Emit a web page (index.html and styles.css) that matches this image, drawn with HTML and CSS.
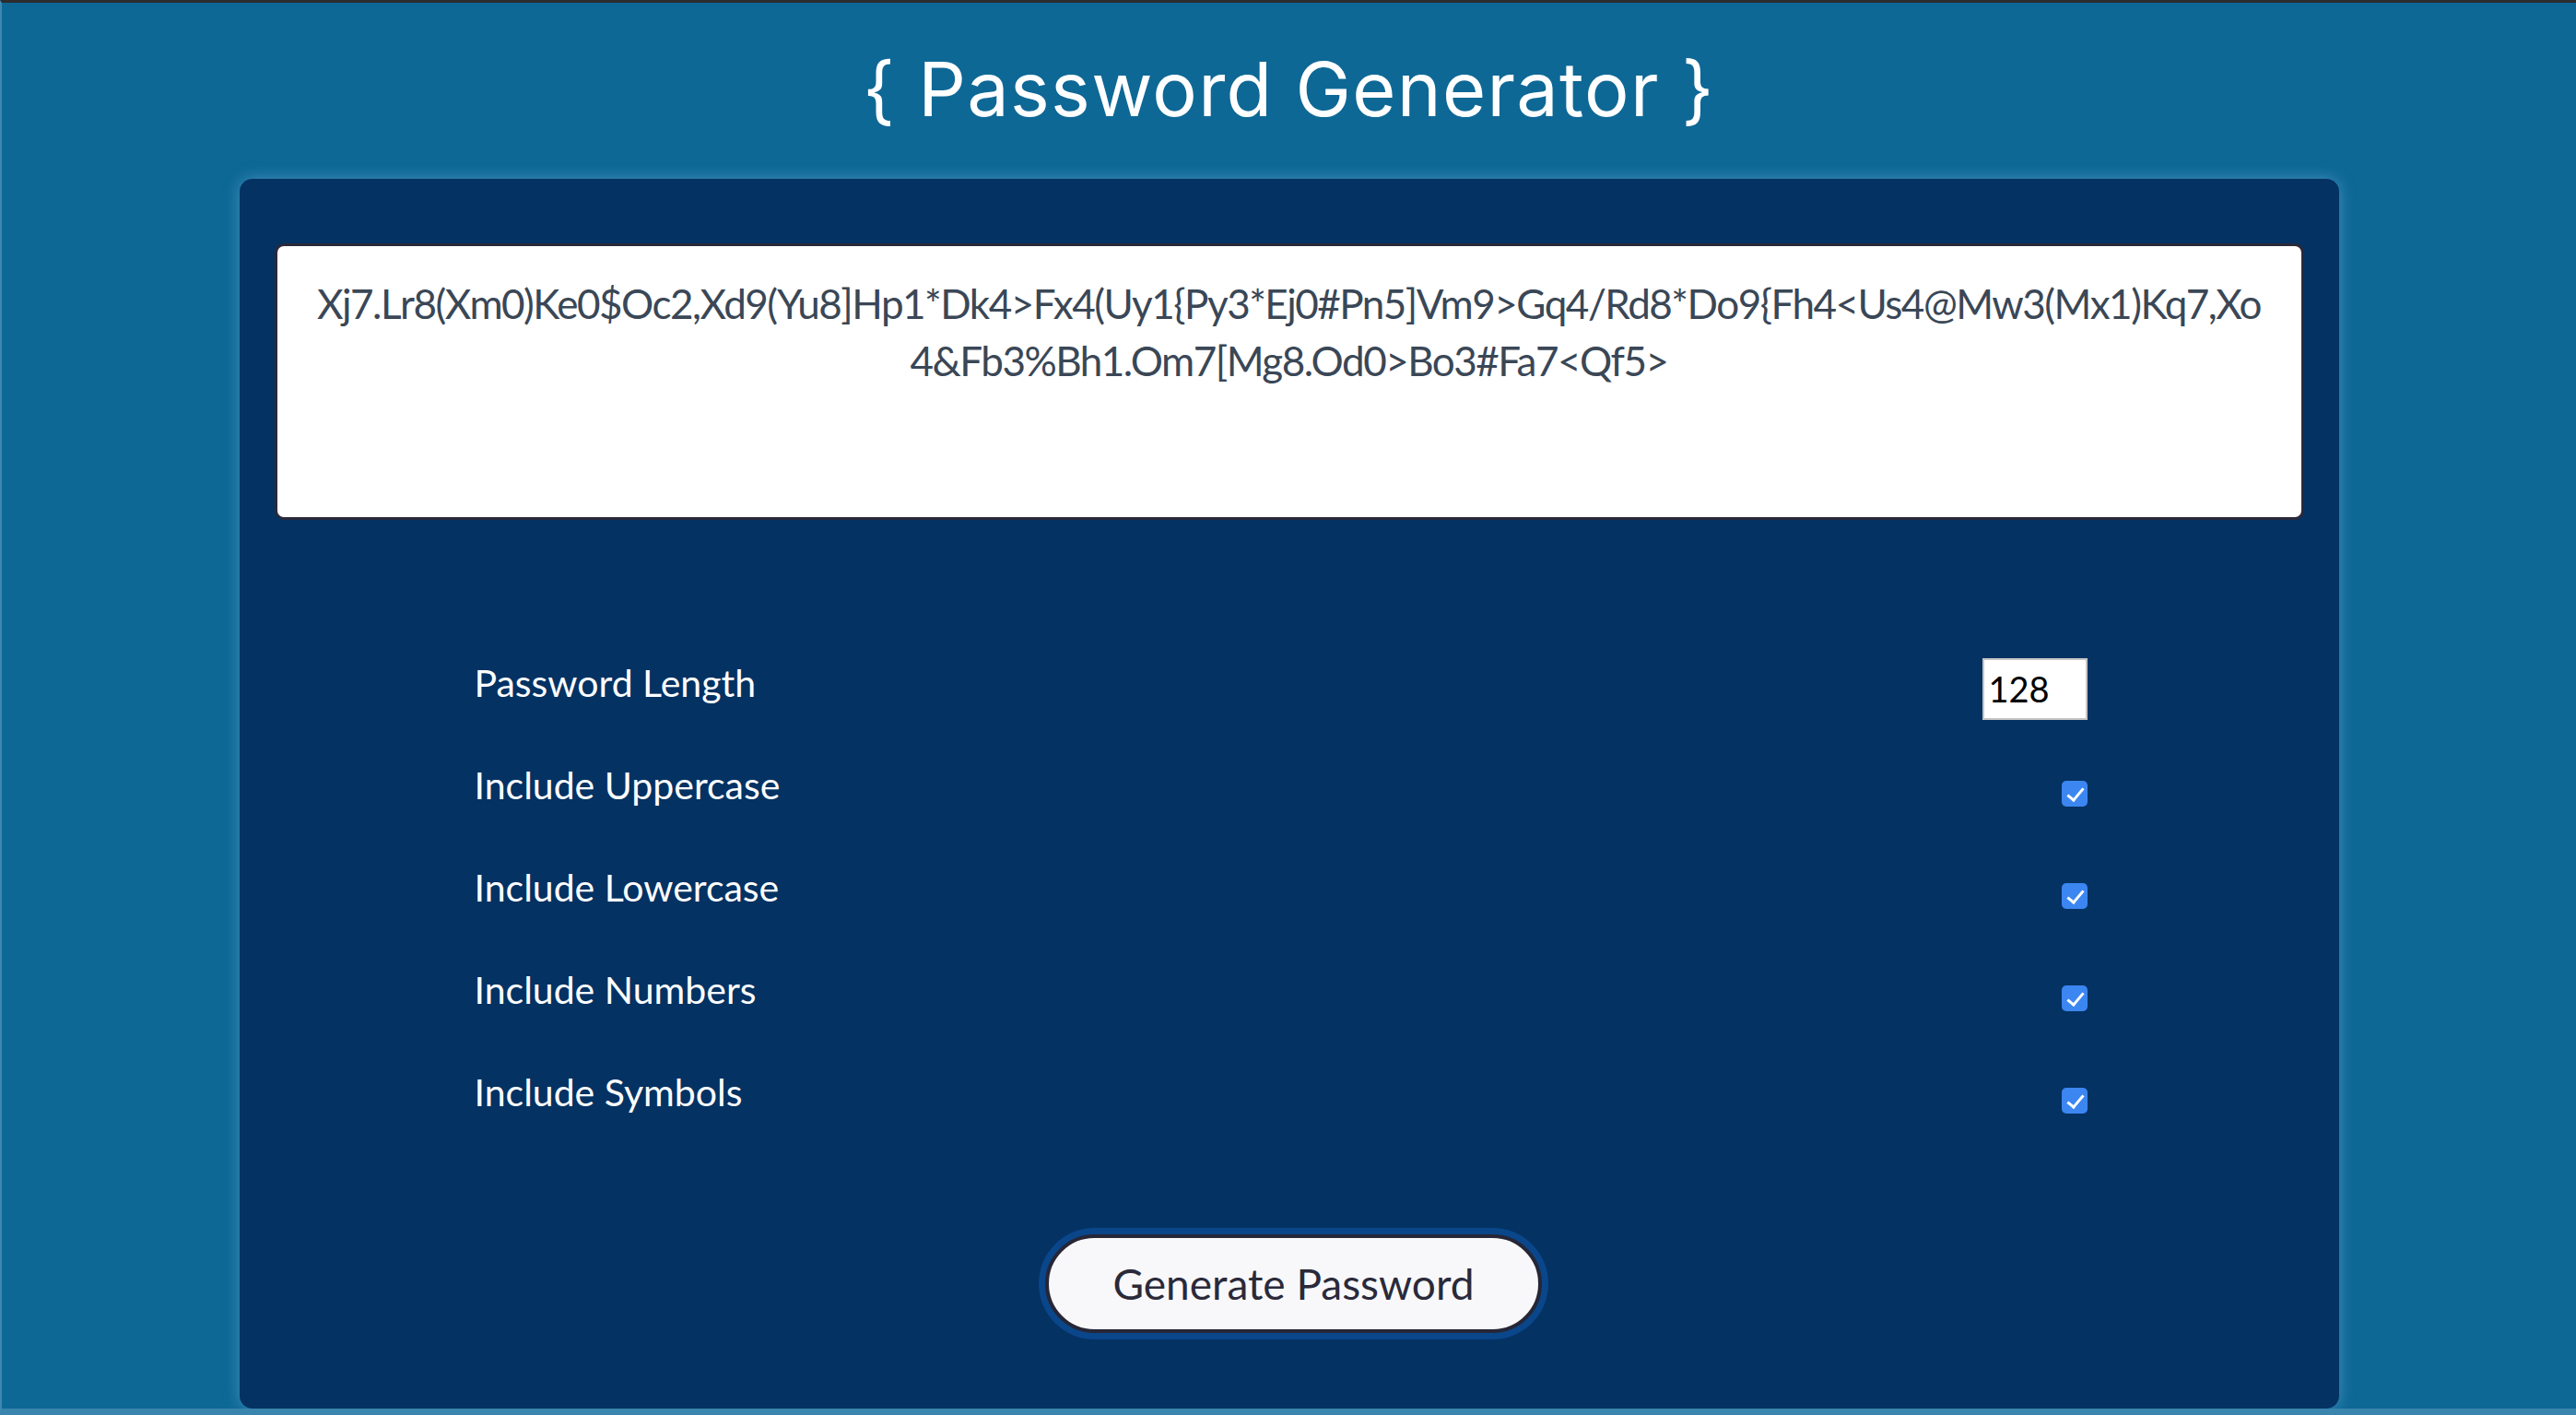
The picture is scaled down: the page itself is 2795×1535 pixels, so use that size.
FILE: index.html
```html
<!DOCTYPE html>
<html lang="en">
<head>
<meta charset="utf-8">
<title>Password Generator</title>
<link rel="stylesheet" href="styles.css">
</head>
<body>
<div class="page">
  <h1 class="title">{ Password Generator }</h1>
  <main class="card">
    <textarea class="output" readonly>Xj7.Lr8(Xm0)Ke0$Oc2,Xd9(Yu8]Hp1*Dk4>Fx4(Uy1{Py3*Ej0#Pn5]Vm9>Gq4/Rd8*Do9{Fh4<Us4@Mw3(Mx1)Kq7,Xo
4&Fb3%Bh1.Om7[Mg8.Od0>Bo3#Fa7<Qf5></textarea>
    <form class="options">
      <div class="row">
        <label class="label" for="len">Password Length</label>
        <input class="num" id="len" type="number" value="128">
      </div>
      <div class="row">
        <label class="label" for="up">Include Uppercase</label>
        <input class="check" id="up" type="checkbox" checked>
      </div>
      <div class="row">
        <label class="label" for="low">Include Lowercase</label>
        <input class="check" id="low" type="checkbox" checked>
      </div>
      <div class="row">
        <label class="label" for="nums">Include Numbers</label>
        <input class="check" id="nums" type="checkbox" checked>
      </div>
      <div class="row">
        <label class="label" for="sym">Include Symbols</label>
        <input class="check" id="sym" type="checkbox" checked>
      </div>
    </form>
    <div class="actions">
      <button class="generate" type="button">Generate Password</button>
    </div>
  </main>
</div>
</body>
</html>
```

FILE: styles.css
```css
* {
  box-sizing: border-box;
}

html,
body {
  margin: 0;
  padding: 0;
}

body {
  background: #0e6896;
  font-family: "Lato", "Open Sans", sans-serif;
}

.page {
  height: 100vh;
  border-top: 3px solid #2c2c2e;
  border-left: 2px solid #3f88b0;
  border-bottom: 7px solid #3a85ad;
  display: flex;
  flex-direction: column;
  align-items: center;
  overflow: hidden;
}

.title {
  margin: 30px 0 32px;
  font-family: "Inter", "Lato", sans-serif;
  font-weight: 400;
  font-size: 81px;
  letter-spacing: 1.3px;
  line-height: 129px;
  color: #ffffff;
  text-align: center;
}

.card {
  width: 2278px;
  flex: 1;
  background: #043263;
  border-radius: 14px;
  box-shadow: 0 0 16px rgba(110, 175, 215, 0.55);
  padding: 70px 38px 0;
  display: flex;
  flex-direction: column;
}

.output {
  display: block;
  width: 100%;
  height: 300px;
  resize: none;
  border: 3px solid #29293a;
  border-radius: 10px;
  background: #ffffff;
  color: #3a4756;
  font-family: "Lato", "Open Sans", sans-serif;
  font-size: 44px;
  letter-spacing: -1.5px;
  line-height: 62px;
  text-align: center;
  padding: 31px 24px;
  overflow: hidden;
  white-space: pre-wrap;
}

.options {
  margin: 121px 235px 0 217px;
  display: flex;
  flex-direction: column;
}

.row {
  height: 111px;
  display: flex;
  align-items: center;
  justify-content: space-between;
}

.label {
  color: #ffffff;
  font-size: 41px;
  line-height: 1;
}

.num {
  width: 114px;
  height: 67px;
  margin: 13px 0 0;
  border: 2px solid #c6c6c6;
  background: #ffffff;
  color: #000000;
  font-family: "Lato", sans-serif;
  font-size: 38px;
  padding: 0 5px;
  -moz-appearance: textfield;
}

.num::-webkit-inner-spin-button,
.num::-webkit-outer-spin-button {
  -webkit-appearance: none;
  margin: 0;
}

.check {
  -webkit-appearance: none;
  appearance: none;
  position: relative;
  width: 28px;
  height: 28px;
  margin: 18px 0 0;
  border-radius: 5px;
  background: #3b86f1;
}

.check::after {
  content: "";
  position: absolute;
  left: 10px;
  top: 4px;
  width: 7px;
  height: 15px;
  border: solid #ffffff;
  border-width: 0 3.5px 3.5px 0;
  transform: rotate(40deg);
}

.actions {
  display: flex;
  justify-content: center;
  padding: 99px 0 0 10px;
}

.generate {
  width: 539px;
  height: 107px;
  border: 4px solid #262636;
  border-radius: 54px;
  background: #f8f8fa;
  box-shadow: 0 0 0 7px #0a468a;
  color: #2a2a3a;
  font-family: "Lato", sans-serif;
  font-size: 46px;
  cursor: pointer;
}
```
